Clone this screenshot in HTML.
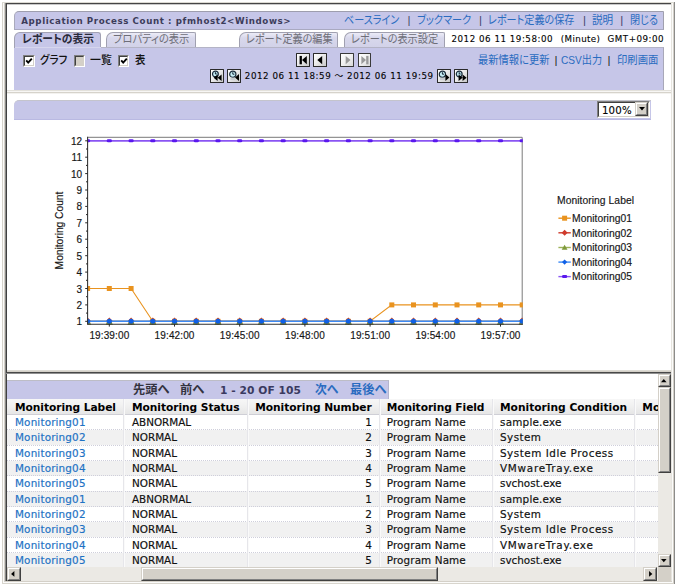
<!DOCTYPE html>
<html lang="ja">
<head>
<meta charset="utf-8">
<title>Application Process Count : pfmhost2&lt;Windows&gt;</title>
<style>
html,body{margin:0;padding:0;}
body{width:679px;height:587px;overflow:hidden;background:#fff;position:relative;
 font-family:"DejaVu Sans","Liberation Sans","Noto Sans CJK JP",sans-serif;font-size:10.67px;color:#000;}
div,span,a,i,b{position:absolute;display:block;box-sizing:border-box;}
.tx{white-space:pre;line-height:14px;font-size:10.67px;text-decoration:none;}
.jp{font-family:"Liberation Sans","Noto Sans CJK JP",sans-serif;font-size:10.2px;}
.b{font-weight:bold;}
.ttl{color:#33334d;}
.lk{color:#2a66b8;}
.sp{color:#44446a;}
.sp2{color:#222;}
.tabon{font-weight:bold;color:#2b2b3b;}
.taboff{color:#7c7c84;}
.dt{color:#1c1c1c;}
.cbl{color:#111;font-weight:500;}
.navoff{color:#33333f;}
.navc{color:#33335a;}
.th{color:#000;}
.td{color:#111;}
a.td.lk,a.lk{color:#2a6cc0;}
.g{left:0;top:0;width:0;height:0;}
/* window frame */
.v{width:1px;}
.h{height:1px;}
.lav{background:#c6c6e8;}
/* classic 3d */
.btn{background:#d4d0c8;border:1px solid;border-color:#d4d0c8 #404040 #404040 #d4d0c8;}
.btn:before{content:"";position:absolute;left:0;top:0;right:0;bottom:0;border:1px solid;border-color:#fff #808080 #808080 #fff;}
.track{background:#ebe9e4;}
.ck{background:#fff;border:1px solid;border-color:#808080 #fff #fff #808080;}
.ck:before{content:"";position:absolute;left:0;top:0;right:0;bottom:0;border:1px solid;border-color:#404040 #d4d0c8 #d4d0c8 #404040;}
.ck.dis{background:#d4d0c8;}
.ib{background:#e4e4e4;border:1.3px solid #2a2a2a;border-radius:1px;}
svg{position:absolute;overflow:visible;}
.tab{background:linear-gradient(#f4f4fb,#dcdcf0 40%,#d6d6ec);border:1px solid #a8a8b6;border-bottom:0;border-radius:7px 2px 0 0;}
.ib{background:linear-gradient(135deg,#fff 0%,#ececec 45%,#c8c8c8 100%);}
.ib.off{background:linear-gradient(135deg,#fff 0%,#f0f0f0 50%,#d8d8d8 100%);border-color:#3a3a3a;}
.rl{height:1px;background:repeating-linear-gradient(90deg,#d0d0dc 0 2px,#e8e8ee 2px 3px);}
.cl{width:1px;background:#e0e0e4;box-shadow:1px 0 0 #fafafa;}
.ttl,.dt{font-size:9.6px;}
.cht100{font-size:10.4px;}
.navoff,.navon{font-size:11.6px;}
.navoff,.navon{font-weight:bold;}
.navc{color:#3a3a60;}
.rl{background:repeating-linear-gradient(90deg,#d9d9e2 0 2px,#ececf1 2px 3px);}
.cl{background:#e6e6ea;}
.ttl{font-size:9.3px;color:#3c3c5a;}
.tab{background:linear-gradient(#ececf7,#d8d8ec 35%,#d2d2e8);border-color:#a0a0b0;}
.taboff{color:#6e6e78;}
.dt{color:#000;-webkit-text-stroke:0.2px #222;}
.ib{border-radius:0.5px;border-width:1.4px;}
.rl{background:repeating-linear-gradient(90deg,#cfcfdb 0 1px,rgba(255,255,255,0) 1px 2px);}
.td{-webkit-text-stroke:0.18px currentColor;}
.ttl{font-size:8.7px;}
.dt{font-size:8.7px;-webkit-text-stroke:0.25px #111;}
.cht100{font-size:10.2px;-webkit-text-stroke:0.1px #111;}
.td{font-size:10.4px;}
a.td.lk{color:#1e72c4;}
.jp{font-size:11.6px;font-feature-settings:"palt";}
.jp{transform-origin:0 0;font-feature-settings:normal;}
.navoff,.navon{font-size:12px;}
.jp{font-feature-settings:"palt";}
.dt{-webkit-text-stroke:0.12px #111;}
#plot text{stroke:#161616;stroke-width:.16px;}

</style>
</head>
<body>
<!-- window frame -->
<div id="frame" class="g">
 <i class="v" style="left:2px;top:2px;height:582px;background:#d6d3cb"></i>
 <i class="v" style="left:3px;top:3px;height:580px;background:#fbfbfa"></i>
 <i class="v" style="left:4px;top:3px;height:580px;background:#d4d0c8"></i>
 <i class="v" style="left:5px;top:3px;height:578px;background:#8a8a88"></i>
 <i class="v" style="left:6px;top:3px;height:578px;background:#404040"></i>
 <i class="h" style="left:2px;top:2px;width:673px;background:#dcdad3"></i>
 <i class="h" style="left:6px;top:3px;width:665px;background:#454545"></i>
 <i class="h" style="left:7px;top:4px;width:664px;background:#c9c9c9"></i>
 <i class="v" style="left:671px;top:3px;height:579px;background:#e6e4de"></i>
 <i class="v" style="left:672px;top:3px;height:580px;background:#fbfbfa"></i>
 <i class="v" style="left:673px;top:3px;height:581px;background:#d4d0c8"></i>
 <i class="v" style="left:674px;top:2px;height:582px;background:#8c8c8a"></i>
 <i class="h" style="left:5px;top:581px;width:667px;background:#d4d0c8"></i>
 <i class="h" style="left:4px;top:582px;width:669px;background:#fbfbfa"></i>
 <i class="h" style="left:2px;top:583px;width:672px;background:#d8d5cd"></i>
</div>

<!-- header frame -->
<div id="header" class="g">
 <div class="lav" style="left:14px;top:11.3px;width:650px;height:19.2px;border:1px solid #9e9eae;border-left-color:#aaaabc;border-bottom-color:#a9a9c0;border-right-color:#a0a0ae;border-radius:5px 0 0 0"></div>
 <div class="lav" style="left:14px;top:47px;width:650px;height:43px;border-top:1px solid #b4b4c6;border-right:1px solid #a8a8b8"></div>
 <div class="lav" style="left:14px;top:32px;width:87px;height:16px;border:1px solid #a2a2b4;border-bottom:0;border-radius:6px 3px 0 0"></div>
 <i class="h" style="left:15px;top:47px;width:86px;background:#d6d6ee"></i>
 <div class="tab" style="left:106px;top:32px;width:90px;height:15px"></div>
 <div class="tab" style="left:239px;top:32px;width:99px;height:15px"></div>
 <div class="tab" style="left:344px;top:32px;width:101px;height:15px"></div>

 <div class="ck" style="left:23px;top:55px;width:11.5px;height:11.5px"><svg width="12" height="12" viewBox="0 0 12 12" style="left:-1px;top:-1px"><path d="M3.2 5.4 L5.2 7.6 L8.8 3.6" fill="none" stroke="#000" stroke-width="1.9"/></svg></div>
 <div class="ck dis" style="left:73.5px;top:55px;width:11.5px;height:11.5px"></div>
 <div class="ck" style="left:117.5px;top:55px;width:11.5px;height:11.5px"><svg width="12" height="12" viewBox="0 0 12 12" style="left:-1px;top:-1px"><path d="M3.2 5.4 L5.2 7.6 L8.8 3.6" fill="none" stroke="#000" stroke-width="1.9"/></svg></div>

 <!-- paging icons row 1 -->
 <div class="ib" style="left:296px;top:53.3px;width:13.8px;height:13.5px"><svg width="14" height="14" viewBox="0 0 14 14" style="left:-1.3px;top:-1.3px"><rect x="3.6" y="2.9" width="2.3" height="8.4" fill="#000"/><path d="M10.8 2.9 L10.8 11.3 L6 7.1 Z" fill="#000"/></svg></div>
 <div class="ib" style="left:313.4px;top:53.3px;width:13.8px;height:13.5px"><svg width="14" height="14" viewBox="0 0 14 14" style="left:-1.3px;top:-1.3px"><path d="M9.2 2.9 L9.2 11.3 L4.3 7.1 Z" fill="#000"/></svg></div>
 <div class="ib off" style="left:340.3px;top:53.3px;width:13.8px;height:13.5px"><svg width="14" height="14" viewBox="0 0 14 14" style="left:-1.3px;top:-1.3px"><path d="M5.7 2.9 L5.7 11.3 L10.5 7.1 Z" fill="#9a9a9a"/></svg></div>
 <div class="ib off" style="left:357.5px;top:53.3px;width:13.8px;height:13.5px"><svg width="14" height="14" viewBox="0 0 14 14" style="left:-1.3px;top:-1.3px"><path d="M4.4 2.9 L4.4 11.3 L9 7.1 Z" fill="#9a9a9a"/><rect x="9.2" y="2.9" width="2.3" height="8.4" fill="#9a9a9a"/></svg></div>

 <!-- time icons row 2 -->
 <div class="ib" style="left:210.3px;top:69px;width:13.8px;height:13.5px"><svg width="14" height="14" viewBox="0 0 14 14" style="left:-1.3px;top:-1.3px"><circle cx="5.4" cy="5" r="2.9" fill="#c6eef6" stroke="#1c2c3c" stroke-width="1.2"/><path d="M5.4 3.2V5H6.9" stroke="#012" stroke-width=".9" fill="none"/><path d="M7.6 5.4V12L3.6 8.7Z M11.6 5.4V12L7.6 8.7Z" fill="#000"/></svg></div>
 <div class="ib" style="left:227.2px;top:69px;width:13.8px;height:13.5px"><svg width="14" height="14" viewBox="0 0 14 14" style="left:-1.3px;top:-1.3px"><circle cx="5.8" cy="5.2" r="3.1" fill="#c6eef6" stroke="#1c2c3c" stroke-width="1.2"/><path d="M5.8 3.2V5.2H7.4" stroke="#012" stroke-width=".9" fill="none"/><rect x="3.4" y="8.6" width="5" height="2.6" fill="#c8ccd0"/><path d="M12 5V12L8 8.5Z" fill="#000"/></svg></div>
 <div class="ib" style="left:436.9px;top:69px;width:13.8px;height:13.5px"><svg width="14" height="14" viewBox="0 0 14 14" style="left:-1.3px;top:-1.3px"><circle cx="5.4" cy="5.2" r="3.1" fill="#c6eef6" stroke="#1c2c3c" stroke-width="1.2"/><path d="M5.4 3.2V5.2H7" stroke="#012" stroke-width=".9" fill="none"/><rect x="3" y="8.6" width="5" height="2.6" fill="#c8ccd0"/><path d="M8.4 5V12L12.4 8.5Z" fill="#000"/></svg></div>
 <div class="ib" style="left:454px;top:69px;width:13.8px;height:13.5px"><svg width="14" height="14" viewBox="0 0 14 14" style="left:-1.3px;top:-1.3px"><circle cx="5.2" cy="5" r="2.9" fill="#c6eef6" stroke="#1c2c3c" stroke-width="1.2"/><path d="M5.2 3.2V5H6.7" stroke="#012" stroke-width=".9" fill="none"/><path d="M4.6 5.4V12L8.6 8.7Z M8.6 5.4V12L12.6 8.7Z" fill="#000"/></svg></div>
<span class="tx b ttl" style="left:21.20px;top:13.70px;letter-spacing:0.597px;">Application Process Count : pfmhost2&lt;Windows&gt;</span>
<a class="tx jp lk" style="left:344.30px;top:13.40px;transform:scaleX(0.868);">ベースライン</a>
<span class="tx jp sp" style="left:407.60px;top:13.40px;">|</span>
<a class="tx jp lk" style="left:416.90px;top:13.40px;transform:scaleX(0.877);">ブックマーク</a>
<span class="tx jp sp" style="left:478.90px;top:13.40px;">|</span>
<a class="tx jp lk" style="left:488.10px;top:13.40px;transform:scaleX(0.870);">レポート定義の保存</a>
<span class="tx jp sp" style="left:583.00px;top:13.40px;">|</span>
<a class="tx jp lk" style="left:592.10px;top:13.40px;transform:scaleX(0.914);">説明</a>
<span class="tx jp sp" style="left:620.30px;top:13.40px;">|</span>
<a class="tx jp lk" style="left:629.50px;top:13.40px;transform:scaleX(0.872);">閉じる</a>
<span class="tx jp tabon" style="left:21.90px;top:32.00px;transform:scaleX(0.926);">レポートの表示</span>
<span class="tx jp taboff" style="left:113.40px;top:32.00px;transform:scaleX(0.888);">プロパティの表示</span>
<span class="tx jp taboff" style="left:245.70px;top:32.00px;transform:scaleX(0.872);">レポート定義の編集</span>
<span class="tx jp taboff" style="left:351.40px;top:32.00px;transform:scaleX(0.877);">レポートの表示設定</span>
<span class="tx dt" style="left:451.50px;top:31.80px;letter-spacing:0.526px;">2012 06 11 19:58:00</span>
<span class="tx dt" style="left:560.80px;top:31.80px;letter-spacing:0.392px;">(Minute)</span>
<span class="tx dt" style="left:607.60px;top:31.80px;letter-spacing:0.518px;">GMT+09:00</span>
<span class="tx jp cbl" style="left:39.80px;top:53.00px;transform:scaleX(0.904);">グラフ</span>
<span class="tx jp cbl" style="left:89.50px;top:53.00px;transform:scaleX(0.940);">一覧</span>
<span class="tx jp cbl" style="left:134.50px;top:53.00px;transform:scaleX(0.900);">表</span>
<a class="tx jp lk" style="left:478.30px;top:52.90px;transform:scaleX(0.886);">最新情報に更新</a>
<span class="tx jp sp2" style="left:554.50px;top:52.90px;">|</span>
<a class="tx jp lk" style="left:561.10px;top:52.90px;transform:scaleX(0.874);">CSV出力</a>
<span class="tx jp sp2" style="left:607.60px;top:52.90px;">|</span>
<a class="tx jp lk" style="left:616.50px;top:52.90px;transform:scaleX(0.890);">印刷画面</a>
<span class="tx dt rng" style="left:244.80px;top:68.70px;letter-spacing:0.556px;">2012 06 11 18:59 ～ 2012 06 11 19:59</span>
</div>

<!-- separator header / chart -->
<div id="sep1" class="g">
 <i class="h" style="left:7px;top:90px;width:664px;background:#e3e1db"></i>
 <i class="h" style="left:7px;top:91px;width:664px;background:#f7f6f4"></i>
 <i class="h" style="left:7px;top:92px;width:664px;background:#d6d3cb"></i>
 <i class="h" style="left:7px;top:93px;width:664px;background:#f3f2ef"></i>
</div>

<!-- chart frame -->
<div id="chart" class="g">
 <div class="lav" style="left:14px;top:100px;width:637px;height:20px;border-top:1px solid #c4c4cc;border-bottom:1px solid #b9b9e2;border-radius:5px 0 0 0"></div>
 <div class="ck" style="left:597px;top:100.5px;width:52.5px;height:17px"></div>
 <div class="btn" style="left:635.3px;top:102.3px;width:12.6px;height:13.4px"><svg width="6" height="3.4" viewBox="0 0 7 4" style="left:2.3px;top:4px"><path d="M0 0H7L3.5 4Z" fill="#000"/></svg></div>
<span class="tx dt cht100" style="left:601.90px;top:104.00px;letter-spacing:0.225px;">100%</span>
<svg id="plot" width="679" height="587" viewBox="0 0 679 587" style="left:0;top:0" font-family="'Liberation Sans',sans-serif" font-size="10.3px" fill="#161616">
<path d="M87.6 137.3H522.2V324.2" fill="none" stroke="#7a7a7a" stroke-width="1"/>
<clipPath id="pc"><rect x="87.6" y="137.3" width="435.2" height="187.9"/></clipPath><g clip-path="url(#pc)">
<polyline points="87.6,288.5 109.3,288.5 131.1,288.5 152.8,321.3 174.5,321.3 196.2,321.3 218.0,321.3 239.7,321.3 261.4,321.3 283.2,321.3 304.9,321.3 326.6,321.3 348.4,321.3 370.1,321.3 391.8,304.9 413.5,304.9 435.3,304.9 457.0,304.9 478.7,304.9 500.5,304.9 522.2,304.9" fill="none" stroke="#e9931f" stroke-width="1.1"/>
<rect x="85.1" y="286.0" width="5" height="5" fill="#e9931f"/>
<rect x="106.8" y="286.0" width="5" height="5" fill="#e9931f"/>
<rect x="128.6" y="286.0" width="5" height="5" fill="#e9931f"/>
<rect x="150.3" y="318.8" width="5" height="5" fill="#e9931f"/>
<rect x="172.0" y="318.8" width="5" height="5" fill="#e9931f"/>
<rect x="193.8" y="318.8" width="5" height="5" fill="#e9931f"/>
<rect x="215.5" y="318.8" width="5" height="5" fill="#e9931f"/>
<rect x="237.2" y="318.8" width="5" height="5" fill="#e9931f"/>
<rect x="258.9" y="318.8" width="5" height="5" fill="#e9931f"/>
<rect x="280.7" y="318.8" width="5" height="5" fill="#e9931f"/>
<rect x="302.4" y="318.8" width="5" height="5" fill="#e9931f"/>
<rect x="324.1" y="318.8" width="5" height="5" fill="#e9931f"/>
<rect x="345.9" y="318.8" width="5" height="5" fill="#e9931f"/>
<rect x="367.6" y="318.8" width="5" height="5" fill="#e9931f"/>
<rect x="389.3" y="302.4" width="5" height="5" fill="#e9931f"/>
<rect x="411.0" y="302.4" width="5" height="5" fill="#e9931f"/>
<rect x="432.8" y="302.4" width="5" height="5" fill="#e9931f"/>
<rect x="454.5" y="302.4" width="5" height="5" fill="#e9931f"/>
<rect x="476.2" y="302.4" width="5" height="5" fill="#e9931f"/>
<rect x="498.0" y="302.4" width="5" height="5" fill="#e9931f"/>
<rect x="519.7" y="302.4" width="5" height="5" fill="#e9931f"/>
<polyline points="87.6,321.3 109.3,321.3 131.1,321.3 152.8,321.3 174.5,321.3 196.2,321.3 218.0,321.3 239.7,321.3 261.4,321.3 283.2,321.3 304.9,321.3 326.6,321.3 348.4,321.3 370.1,321.3 391.8,321.3 413.5,321.3 435.3,321.3 457.0,321.3 478.7,321.3 500.5,321.3 522.2,321.3" fill="none" stroke="#cf3a2c" stroke-width="1.1"/>
<path d="M87.6 317.6l3.7 3.7l-3.7 3.7l-3.7 -3.7z" fill="#cf3a2c"/>
<path d="M109.3 317.6l3.7 3.7l-3.7 3.7l-3.7 -3.7z" fill="#cf3a2c"/>
<path d="M131.1 317.6l3.7 3.7l-3.7 3.7l-3.7 -3.7z" fill="#cf3a2c"/>
<path d="M152.8 317.6l3.7 3.7l-3.7 3.7l-3.7 -3.7z" fill="#cf3a2c"/>
<path d="M174.5 317.6l3.7 3.7l-3.7 3.7l-3.7 -3.7z" fill="#cf3a2c"/>
<path d="M196.2 317.6l3.7 3.7l-3.7 3.7l-3.7 -3.7z" fill="#cf3a2c"/>
<path d="M218.0 317.6l3.7 3.7l-3.7 3.7l-3.7 -3.7z" fill="#cf3a2c"/>
<path d="M239.7 317.6l3.7 3.7l-3.7 3.7l-3.7 -3.7z" fill="#cf3a2c"/>
<path d="M261.4 317.6l3.7 3.7l-3.7 3.7l-3.7 -3.7z" fill="#cf3a2c"/>
<path d="M283.2 317.6l3.7 3.7l-3.7 3.7l-3.7 -3.7z" fill="#cf3a2c"/>
<path d="M304.9 317.6l3.7 3.7l-3.7 3.7l-3.7 -3.7z" fill="#cf3a2c"/>
<path d="M326.6 317.6l3.7 3.7l-3.7 3.7l-3.7 -3.7z" fill="#cf3a2c"/>
<path d="M348.4 317.6l3.7 3.7l-3.7 3.7l-3.7 -3.7z" fill="#cf3a2c"/>
<path d="M370.1 317.6l3.7 3.7l-3.7 3.7l-3.7 -3.7z" fill="#cf3a2c"/>
<path d="M391.8 317.6l3.7 3.7l-3.7 3.7l-3.7 -3.7z" fill="#cf3a2c"/>
<path d="M413.5 317.6l3.7 3.7l-3.7 3.7l-3.7 -3.7z" fill="#cf3a2c"/>
<path d="M435.3 317.6l3.7 3.7l-3.7 3.7l-3.7 -3.7z" fill="#cf3a2c"/>
<path d="M457.0 317.6l3.7 3.7l-3.7 3.7l-3.7 -3.7z" fill="#cf3a2c"/>
<path d="M478.7 317.6l3.7 3.7l-3.7 3.7l-3.7 -3.7z" fill="#cf3a2c"/>
<path d="M500.5 317.6l3.7 3.7l-3.7 3.7l-3.7 -3.7z" fill="#cf3a2c"/>
<path d="M522.2 317.6l3.7 3.7l-3.7 3.7l-3.7 -3.7z" fill="#cf3a2c"/>
<polyline points="87.6,321.3 109.3,321.3 131.1,321.3 152.8,321.3 174.5,321.3 196.2,321.3 218.0,321.3 239.7,321.3 261.4,321.3 283.2,321.3 304.9,321.3 326.6,321.3 348.4,321.3 370.1,321.3 391.8,321.3 413.5,321.3 435.3,321.3 457.0,321.3 478.7,321.3 500.5,321.3 522.2,321.3" fill="none" stroke="#7f9a3c" stroke-width="1.1"/>
<path d="M87.6 318.2l3.7 6.5h-7.4z" fill="#7f9a3c"/>
<path d="M109.3 318.2l3.7 6.5h-7.4z" fill="#7f9a3c"/>
<path d="M131.1 318.2l3.7 6.5h-7.4z" fill="#7f9a3c"/>
<path d="M152.8 318.2l3.7 6.5h-7.4z" fill="#7f9a3c"/>
<path d="M174.5 318.2l3.7 6.5h-7.4z" fill="#7f9a3c"/>
<path d="M196.2 318.2l3.7 6.5h-7.4z" fill="#7f9a3c"/>
<path d="M218.0 318.2l3.7 6.5h-7.4z" fill="#7f9a3c"/>
<path d="M239.7 318.2l3.7 6.5h-7.4z" fill="#7f9a3c"/>
<path d="M261.4 318.2l3.7 6.5h-7.4z" fill="#7f9a3c"/>
<path d="M283.2 318.2l3.7 6.5h-7.4z" fill="#7f9a3c"/>
<path d="M304.9 318.2l3.7 6.5h-7.4z" fill="#7f9a3c"/>
<path d="M326.6 318.2l3.7 6.5h-7.4z" fill="#7f9a3c"/>
<path d="M348.4 318.2l3.7 6.5h-7.4z" fill="#7f9a3c"/>
<path d="M370.1 318.2l3.7 6.5h-7.4z" fill="#7f9a3c"/>
<path d="M391.8 318.2l3.7 6.5h-7.4z" fill="#7f9a3c"/>
<path d="M413.5 318.2l3.7 6.5h-7.4z" fill="#7f9a3c"/>
<path d="M435.3 318.2l3.7 6.5h-7.4z" fill="#7f9a3c"/>
<path d="M457.0 318.2l3.7 6.5h-7.4z" fill="#7f9a3c"/>
<path d="M478.7 318.2l3.7 6.5h-7.4z" fill="#7f9a3c"/>
<path d="M500.5 318.2l3.7 6.5h-7.4z" fill="#7f9a3c"/>
<path d="M522.2 318.2l3.7 6.5h-7.4z" fill="#7f9a3c"/>
<polyline points="87.6,321.3 109.3,321.3 131.1,321.3 152.8,321.3 174.5,321.3 196.2,321.3 218.0,321.3 239.7,321.3 261.4,321.3 283.2,321.3 304.9,321.3 326.6,321.3 348.4,321.3 370.1,321.3 391.8,321.3 413.5,321.3 435.3,321.3 457.0,321.3 478.7,321.3 500.5,321.3 522.2,321.3" fill="none" stroke="#3d8af5" stroke-width="1.6"/>
<circle cx="87.6" cy="321.3" r="2.5" fill="#1060e6"/>
<circle cx="109.3" cy="321.3" r="2.5" fill="#1060e6"/>
<circle cx="131.1" cy="321.3" r="2.5" fill="#1060e6"/>
<circle cx="152.8" cy="321.3" r="2.5" fill="#1060e6"/>
<circle cx="174.5" cy="321.3" r="2.5" fill="#1060e6"/>
<circle cx="196.2" cy="321.3" r="2.5" fill="#1060e6"/>
<circle cx="218.0" cy="321.3" r="2.5" fill="#1060e6"/>
<circle cx="239.7" cy="321.3" r="2.5" fill="#1060e6"/>
<circle cx="261.4" cy="321.3" r="2.5" fill="#1060e6"/>
<circle cx="283.2" cy="321.3" r="2.5" fill="#1060e6"/>
<circle cx="304.9" cy="321.3" r="2.5" fill="#1060e6"/>
<circle cx="326.6" cy="321.3" r="2.5" fill="#1060e6"/>
<circle cx="348.4" cy="321.3" r="2.5" fill="#1060e6"/>
<circle cx="370.1" cy="321.3" r="2.5" fill="#1060e6"/>
<circle cx="391.8" cy="321.3" r="2.5" fill="#1060e6"/>
<circle cx="413.5" cy="321.3" r="2.5" fill="#1060e6"/>
<circle cx="435.3" cy="321.3" r="2.5" fill="#1060e6"/>
<circle cx="457.0" cy="321.3" r="2.5" fill="#1060e6"/>
<circle cx="478.7" cy="321.3" r="2.5" fill="#1060e6"/>
<circle cx="500.5" cy="321.3" r="2.5" fill="#1060e6"/>
<circle cx="522.2" cy="321.3" r="2.5" fill="#1060e6"/>
<polyline points="87.6,140.8 109.3,140.8 131.1,140.8 152.8,140.8 174.5,140.8 196.2,140.8 218.0,140.8 239.7,140.8 261.4,140.8 283.2,140.8 304.9,140.8 326.6,140.8 348.4,140.8 370.1,140.8 391.8,140.8 413.5,140.8 435.3,140.8 457.0,140.8 478.7,140.8 500.5,140.8 522.2,140.8" fill="none" stroke="#8a55f3" stroke-width="1.7"/>
<rect x="85.0" y="139.3" width="5.2" height="3" rx="1.4" fill="#5a18ee"/>
<rect x="106.7" y="139.3" width="5.2" height="3" rx="1.4" fill="#5a18ee"/>
<rect x="128.5" y="139.3" width="5.2" height="3" rx="1.4" fill="#5a18ee"/>
<rect x="150.2" y="139.3" width="5.2" height="3" rx="1.4" fill="#5a18ee"/>
<rect x="171.9" y="139.3" width="5.2" height="3" rx="1.4" fill="#5a18ee"/>
<rect x="193.7" y="139.3" width="5.2" height="3" rx="1.4" fill="#5a18ee"/>
<rect x="215.4" y="139.3" width="5.2" height="3" rx="1.4" fill="#5a18ee"/>
<rect x="237.1" y="139.3" width="5.2" height="3" rx="1.4" fill="#5a18ee"/>
<rect x="258.8" y="139.3" width="5.2" height="3" rx="1.4" fill="#5a18ee"/>
<rect x="280.6" y="139.3" width="5.2" height="3" rx="1.4" fill="#5a18ee"/>
<rect x="302.3" y="139.3" width="5.2" height="3" rx="1.4" fill="#5a18ee"/>
<rect x="324.0" y="139.3" width="5.2" height="3" rx="1.4" fill="#5a18ee"/>
<rect x="345.8" y="139.3" width="5.2" height="3" rx="1.4" fill="#5a18ee"/>
<rect x="367.5" y="139.3" width="5.2" height="3" rx="1.4" fill="#5a18ee"/>
<rect x="389.2" y="139.3" width="5.2" height="3" rx="1.4" fill="#5a18ee"/>
<rect x="410.9" y="139.3" width="5.2" height="3" rx="1.4" fill="#5a18ee"/>
<rect x="432.7" y="139.3" width="5.2" height="3" rx="1.4" fill="#5a18ee"/>
<rect x="454.4" y="139.3" width="5.2" height="3" rx="1.4" fill="#5a18ee"/>
<rect x="476.1" y="139.3" width="5.2" height="3" rx="1.4" fill="#5a18ee"/>
<rect x="497.9" y="139.3" width="5.2" height="3" rx="1.4" fill="#5a18ee"/>
<rect x="519.6" y="139.3" width="5.2" height="3" rx="1.4" fill="#5a18ee"/>
</g>
<path d="M87.6 136.8V324.2H522.7" fill="none" stroke="#303030" stroke-width="1.05"/>
<path d="M87.6 321.3h-2.4" stroke="#2a2a2a" stroke-width="1"/>
<path d="M87.6 313.1h-1.6" stroke="#2a2a2a" stroke-width="1"/>
<text x="82.0" y="325.3" text-anchor="end" font-size="10px">1</text>
<path d="M87.6 304.9h-2.4" stroke="#2a2a2a" stroke-width="1"/>
<path d="M87.6 296.7h-1.6" stroke="#2a2a2a" stroke-width="1"/>
<text x="82.0" y="308.9" text-anchor="end" font-size="10px">2</text>
<path d="M87.6 288.5h-2.4" stroke="#2a2a2a" stroke-width="1"/>
<path d="M87.6 280.3h-1.6" stroke="#2a2a2a" stroke-width="1"/>
<text x="82.0" y="292.5" text-anchor="end" font-size="10px">3</text>
<path d="M87.6 272.1h-2.4" stroke="#2a2a2a" stroke-width="1"/>
<path d="M87.6 263.9h-1.6" stroke="#2a2a2a" stroke-width="1"/>
<text x="82.0" y="276.1" text-anchor="end" font-size="10px">4</text>
<path d="M87.6 255.7h-2.4" stroke="#2a2a2a" stroke-width="1"/>
<path d="M87.6 247.5h-1.6" stroke="#2a2a2a" stroke-width="1"/>
<text x="82.0" y="259.7" text-anchor="end" font-size="10px">5</text>
<path d="M87.6 239.2h-2.4" stroke="#2a2a2a" stroke-width="1"/>
<path d="M87.6 231.1h-1.6" stroke="#2a2a2a" stroke-width="1"/>
<text x="82.0" y="243.2" text-anchor="end" font-size="10px">6</text>
<path d="M87.6 222.8h-2.4" stroke="#2a2a2a" stroke-width="1"/>
<path d="M87.6 214.6h-1.6" stroke="#2a2a2a" stroke-width="1"/>
<text x="82.0" y="226.8" text-anchor="end" font-size="10px">7</text>
<path d="M87.6 206.4h-2.4" stroke="#2a2a2a" stroke-width="1"/>
<path d="M87.6 198.2h-1.6" stroke="#2a2a2a" stroke-width="1"/>
<text x="82.0" y="210.4" text-anchor="end" font-size="10px">8</text>
<path d="M87.6 190.0h-2.4" stroke="#2a2a2a" stroke-width="1"/>
<path d="M87.6 181.8h-1.6" stroke="#2a2a2a" stroke-width="1"/>
<text x="82.0" y="194.0" text-anchor="end" font-size="10px">9</text>
<path d="M87.6 173.6h-2.4" stroke="#2a2a2a" stroke-width="1"/>
<path d="M87.6 165.4h-1.6" stroke="#2a2a2a" stroke-width="1"/>
<text x="82.0" y="177.6" text-anchor="end" font-size="10px">10</text>
<path d="M87.6 157.2h-2.4" stroke="#2a2a2a" stroke-width="1"/>
<path d="M87.6 149.0h-1.6" stroke="#2a2a2a" stroke-width="1"/>
<text x="82.0" y="161.2" text-anchor="end" font-size="10px">11</text>
<path d="M87.6 140.8h-2.4" stroke="#2a2a2a" stroke-width="1"/>
<text x="82.0" y="144.8" text-anchor="end" font-size="10px">12</text>
<path d="M109.3 324.2v2.4" stroke="#2a2a2a" stroke-width="1"/>
<text x="109.3" y="338.6" text-anchor="middle" font-size="10px" textLength="39.8" lengthAdjust="spacing">19:39:00</text>
<path d="M174.5 324.2v2.4" stroke="#2a2a2a" stroke-width="1"/>
<text x="174.5" y="338.6" text-anchor="middle" font-size="10px" textLength="39.8" lengthAdjust="spacing">19:42:00</text>
<path d="M239.7 324.2v2.4" stroke="#2a2a2a" stroke-width="1"/>
<text x="239.7" y="338.6" text-anchor="middle" font-size="10px" textLength="39.8" lengthAdjust="spacing">19:45:00</text>
<path d="M304.9 324.2v2.4" stroke="#2a2a2a" stroke-width="1"/>
<text x="304.9" y="338.6" text-anchor="middle" font-size="10px" textLength="39.8" lengthAdjust="spacing">19:48:00</text>
<path d="M370.1 324.2v2.4" stroke="#2a2a2a" stroke-width="1"/>
<text x="370.1" y="338.6" text-anchor="middle" font-size="10px" textLength="39.8" lengthAdjust="spacing">19:51:00</text>
<path d="M435.3 324.2v2.4" stroke="#2a2a2a" stroke-width="1"/>
<text x="435.3" y="338.6" text-anchor="middle" font-size="10px" textLength="39.8" lengthAdjust="spacing">19:54:00</text>
<path d="M500.5 324.2v2.4" stroke="#2a2a2a" stroke-width="1"/>
<text x="500.5" y="338.6" text-anchor="middle" font-size="10px" textLength="39.8" lengthAdjust="spacing">19:57:00</text>
<text transform="translate(63.4 230.5) rotate(-90)" text-anchor="middle" textLength="77.8" lengthAdjust="spacing">Monitoring Count</text>
<text x="557" y="204.2" textLength="77" lengthAdjust="spacing">Monitoring Label</text>
<path d="M558.4 218.2h12.4" stroke="#e9931f" stroke-width="1.4"/>
<rect x="562.1" y="215.7" width="5" height="5" fill="#e9931f"/>
<text x="572.1" y="221.9" textLength="59.8" lengthAdjust="spacing">Monitoring01</text>
<path d="M558.4 232.8h12.4" stroke="#cf3a2c" stroke-width="1.4"/>
<path d="M564.6 229.8l3 3l-3 3l-3 -3z" fill="#cf3a2c"/>
<text x="572.1" y="236.5" textLength="59.8" lengthAdjust="spacing">Monitoring02</text>
<path d="M558.4 247.5h12.4" stroke="#9db35a" stroke-width="1.4"/>
<path d="M564.6 244.8l2.9 5h-5.8z" fill="#7f9a3c"/>
<text x="572.1" y="251.2" textLength="59.8" lengthAdjust="spacing">Monitoring03</text>
<path d="M558.4 262.1h12.4" stroke="#3d8af5" stroke-width="1.4"/>
<path d="M564.6 259.5l2.6 2.6l-2.6 2.6l-2.6 -2.6z" fill="#1060e6"/>
<text x="572.1" y="265.8" textLength="59.8" lengthAdjust="spacing">Monitoring04</text>
<path d="M558.4 276.6h12.4" stroke="#8a55f3" stroke-width="1.4"/>
<rect x="562.0" y="275.1" width="5.2" height="3" rx="1.4" fill="#5a18ee"/>
<text x="572.1" y="280.3" textLength="59.8" lengthAdjust="spacing">Monitoring05</text>
</svg>
</div>

<!-- separator chart / table -->
<div id="sep2" class="g">
 <i class="h" style="left:7px;top:370px;width:664px;background:#dddbd4"></i>
 <i class="h" style="left:7px;top:371px;width:664px;background:#d4d0c8"></i>
 <i class="h" style="left:6px;top:372px;width:665px;background:#484848"></i>
 <i class="h" style="left:6px;top:373px;width:665px;background:#909090"></i>
</div>

<!-- table frame -->
<div id="tframe" style="left:7px;top:374px;width:650.5px;height:193px;overflow:hidden;background:#fff">
 <div id="tinner" style="left:-7px;top:-374px;width:0;height:0">
  <div class="lav" style="left:7px;top:380px;width:381.5px;height:19px;border-top:1px solid #bdbdc6;border-right:1px solid #b5b5cd"></div>
  <div id="thead" style="left:7px;top:399px;width:660px;height:15.5px;background:linear-gradient(#f7f7f7,#f1f1f1 45%,#e6e6e6);border-bottom:1px solid #cfcfd6"></div>
<div class="row" style="left:7px;top:414.50px;width:660px;height:15.34px;background:#fff"></div>
<div class="row" style="left:7px;top:429.84px;width:660px;height:15.34px;background:#f1f1f1"></div>
<div class="row" style="left:7px;top:445.18px;width:660px;height:15.34px;background:#fff"></div>
<div class="row" style="left:7px;top:460.52px;width:660px;height:15.34px;background:#f1f1f1"></div>
<div class="row" style="left:7px;top:475.86px;width:660px;height:15.34px;background:#fff"></div>
<div class="row" style="left:7px;top:491.20px;width:660px;height:15.34px;background:#f1f1f1"></div>
<div class="row" style="left:7px;top:506.54px;width:660px;height:15.34px;background:#fff"></div>
<div class="row" style="left:7px;top:521.88px;width:660px;height:15.34px;background:#f1f1f1"></div>
<div class="row" style="left:7px;top:537.22px;width:660px;height:15.34px;background:#fff"></div>
<div class="row" style="left:7px;top:552.56px;width:660px;height:15.34px;background:#f1f1f1"></div>
<i class="rl" style="left:7px;top:429.34px;width:660px"></i>
<i class="rl" style="left:7px;top:444.68px;width:660px"></i>
<i class="rl" style="left:7px;top:460.02px;width:660px"></i>
<i class="rl" style="left:7px;top:475.36px;width:660px"></i>
<i class="rl" style="left:7px;top:490.70px;width:660px"></i>
<i class="rl" style="left:7px;top:506.04px;width:660px"></i>
<i class="rl" style="left:7px;top:521.38px;width:660px"></i>
<i class="rl" style="left:7px;top:536.72px;width:660px"></i>
<i class="rl" style="left:7px;top:552.06px;width:660px"></i>
<i class="cl" style="left:123.3px;top:399px;height:168px"></i>
<i class="cl" style="left:246.8px;top:399px;height:168px"></i>
<i class="cl" style="left:378.7px;top:399px;height:168px"></i>
<i class="cl" style="left:491.9px;top:399px;height:168px"></i>
<i class="cl" style="left:633.8px;top:399px;height:168px"></i>
<span class="tx jp navoff" style="left:133.25px;top:383.20px;transform:scaleX(1.017);">先頭へ</span>
<span class="tx jp navoff" style="left:180.25px;top:383.20px;transform:scaleX(1.025);">前へ</span>
<span class="tx b navc" style="left:220.00px;top:384.20px;letter-spacing:0.076px;">1 - 20 OF 105</span>
<a class="tx jp lk navon" style="left:315.00px;top:383.20px;transform:scaleX(0.983);">次へ</a>
<a class="tx jp lk navon" style="left:349.50px;top:383.20px;transform:scaleX(1.017);">最後へ</a>
<span class="tx b th" style="left:15.00px;top:400.80px;letter-spacing:-0.060px;">Monitoring Label</span>
<span class="tx b th" style="left:132.00px;top:400.80px;letter-spacing:-0.057px;">Monitoring Status</span>
<span class="tx b th" style="left:255.20px;top:400.80px;letter-spacing:-0.037px;">Monitoring Number</span>
<span class="tx b th" style="left:386.75px;top:400.80px;letter-spacing:-0.074px;">Monitoring Field</span>
<span class="tx b th" style="left:500.00px;top:400.80px;">Monitoring Condition</span>
<span class="tx b th" style="left:642.30px;top:400.80px;">Monitoring Min</span>
<a class="tx td lk" style="left:15.00px;top:414.90px;letter-spacing:0.155px;">Monitoring01</a>
<span class="tx td" style="left:132.00px;top:414.90px;letter-spacing:-0.040px;">ABNORMAL</span>
<span class="tx td" style="left:365.18px;top:414.90px;">1</span>
<span class="tx td" style="left:386.75px;top:414.90px;letter-spacing:0.108px;">Program Name</span>
<span class="tx td" style="left:500.00px;top:414.90px;letter-spacing:0.220px;">sample.exe</span>
<a class="tx td lk" style="left:15.00px;top:430.24px;letter-spacing:0.155px;">Monitoring02</a>
<span class="tx td" style="left:132.00px;top:430.24px;letter-spacing:-0.009px;">NORMAL</span>
<span class="tx td" style="left:365.18px;top:430.24px;">2</span>
<span class="tx td" style="left:386.75px;top:430.24px;letter-spacing:0.108px;">Program Name</span>
<span class="tx td" style="left:500.00px;top:430.24px;letter-spacing:0.450px;">System</span>
<a class="tx td lk" style="left:15.00px;top:445.58px;letter-spacing:0.155px;">Monitoring03</a>
<span class="tx td" style="left:132.00px;top:445.58px;letter-spacing:-0.009px;">NORMAL</span>
<span class="tx td" style="left:365.18px;top:445.58px;">3</span>
<span class="tx td" style="left:386.75px;top:445.58px;letter-spacing:0.108px;">Program Name</span>
<span class="tx td" style="left:500.00px;top:445.58px;letter-spacing:0.527px;">System Idle Process</span>
<a class="tx td lk" style="left:15.00px;top:460.92px;letter-spacing:0.155px;">Monitoring04</a>
<span class="tx td" style="left:132.00px;top:460.92px;letter-spacing:-0.009px;">NORMAL</span>
<span class="tx td" style="left:365.18px;top:460.92px;">4</span>
<span class="tx td" style="left:386.75px;top:460.92px;letter-spacing:0.108px;">Program Name</span>
<span class="tx td" style="left:500.00px;top:460.92px;letter-spacing:0.736px;">VMwareTray.exe</span>
<a class="tx td lk" style="left:15.00px;top:476.26px;letter-spacing:0.155px;">Monitoring05</a>
<span class="tx td" style="left:132.00px;top:476.26px;letter-spacing:-0.009px;">NORMAL</span>
<span class="tx td" style="left:365.18px;top:476.26px;">5</span>
<span class="tx td" style="left:386.75px;top:476.26px;letter-spacing:0.108px;">Program Name</span>
<span class="tx td" style="left:500.00px;top:476.26px;">svchost.exe</span>
<a class="tx td lk" style="left:15.00px;top:491.60px;letter-spacing:0.155px;">Monitoring01</a>
<span class="tx td" style="left:132.00px;top:491.60px;letter-spacing:-0.040px;">ABNORMAL</span>
<span class="tx td" style="left:365.18px;top:491.60px;">1</span>
<span class="tx td" style="left:386.75px;top:491.60px;letter-spacing:0.108px;">Program Name</span>
<span class="tx td" style="left:500.00px;top:491.60px;letter-spacing:0.220px;">sample.exe</span>
<a class="tx td lk" style="left:15.00px;top:506.94px;letter-spacing:0.155px;">Monitoring02</a>
<span class="tx td" style="left:132.00px;top:506.94px;letter-spacing:-0.009px;">NORMAL</span>
<span class="tx td" style="left:365.18px;top:506.94px;">2</span>
<span class="tx td" style="left:386.75px;top:506.94px;letter-spacing:0.108px;">Program Name</span>
<span class="tx td" style="left:500.00px;top:506.94px;letter-spacing:0.450px;">System</span>
<a class="tx td lk" style="left:15.00px;top:522.28px;letter-spacing:0.155px;">Monitoring03</a>
<span class="tx td" style="left:132.00px;top:522.28px;letter-spacing:-0.009px;">NORMAL</span>
<span class="tx td" style="left:365.18px;top:522.28px;">3</span>
<span class="tx td" style="left:386.75px;top:522.28px;letter-spacing:0.108px;">Program Name</span>
<span class="tx td" style="left:500.00px;top:522.28px;letter-spacing:0.527px;">System Idle Process</span>
<a class="tx td lk" style="left:15.00px;top:537.62px;letter-spacing:0.155px;">Monitoring04</a>
<span class="tx td" style="left:132.00px;top:537.62px;letter-spacing:-0.009px;">NORMAL</span>
<span class="tx td" style="left:365.18px;top:537.62px;">4</span>
<span class="tx td" style="left:386.75px;top:537.62px;letter-spacing:0.108px;">Program Name</span>
<span class="tx td" style="left:500.00px;top:537.62px;letter-spacing:0.736px;">VMwareTray.exe</span>
<a class="tx td lk" style="left:15.00px;top:552.96px;letter-spacing:0.155px;">Monitoring05</a>
<span class="tx td" style="left:132.00px;top:552.96px;letter-spacing:-0.009px;">NORMAL</span>
<span class="tx td" style="left:365.18px;top:552.96px;">5</span>
<span class="tx td" style="left:386.75px;top:552.96px;letter-spacing:0.108px;">Program Name</span>
<span class="tx td" style="left:500.00px;top:552.96px;">svchost.exe</span>
 </div>
</div>

<!-- scrollbars -->
<div id="vscroll" class="g">
 <div class="track" style="left:657.5px;top:374px;width:13px;height:193px"></div>
 <div class="btn" style="left:657.5px;top:374px;width:13px;height:13px"><svg width="5.6" height="3.2" viewBox="0 0 7 4" style="left:2.7px;top:3.6px"><path d="M0 4H7L3.5 0Z" fill="#000"/></svg></div>
 <div class="btn" style="left:657.5px;top:387px;width:13px;height:86.2px"></div>
 <div class="btn" style="left:657.5px;top:554px;width:13px;height:13px"><svg width="5.6" height="3.2" viewBox="0 0 7 4" style="left:2.7px;top:4px"><path d="M0 0H7L3.5 4Z" fill="#000"/></svg></div>
</div>
<div id="hscroll" class="g">
 <div class="track" style="left:7px;top:567px;width:650.5px;height:14px"></div>
 <div class="btn" style="left:7px;top:567px;width:13.5px;height:14px"><svg width="3.4" height="5.8" viewBox="0 0 4 7" style="left:3.4px;top:3.1px"><path d="M4 0V7L0 3.5Z" fill="#000"/></svg></div>
 <div class="btn" style="left:140.5px;top:567px;width:297px;height:14px"></div>
 <div class="btn" style="left:643.2px;top:567px;width:13.8px;height:14px"><svg width="3.4" height="5.8" viewBox="0 0 4 7" style="left:4.4px;top:3.1px"><path d="M0 0V7L4 3.5Z" fill="#000"/></svg></div>
 <div style="left:657.5px;top:567px;width:13.5px;height:14px;background:#d4d0c8"></div>
</div>

</body>
</html>
